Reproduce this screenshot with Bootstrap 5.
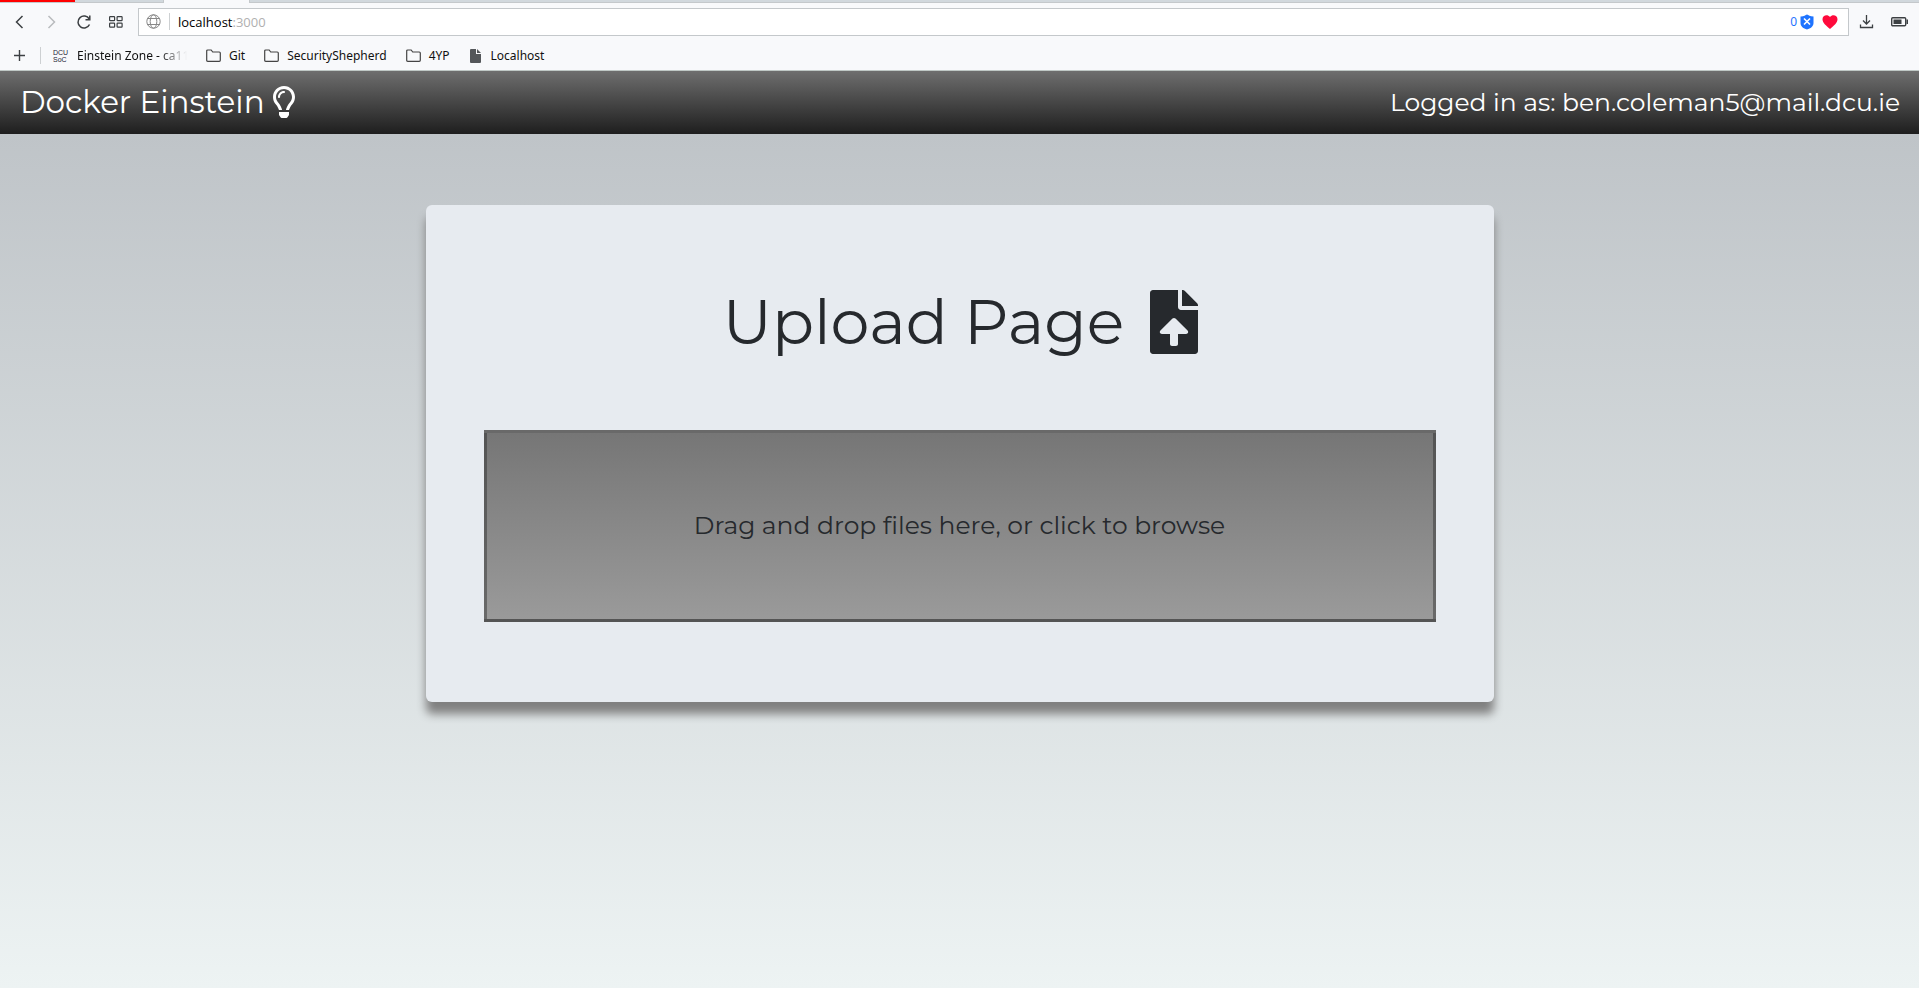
<!DOCTYPE html>
<html lang="en">
<head>
<meta charset="utf-8">
<meta name="viewport" content="width=device-width, initial-scale=1">
<title>Docker Einstein</title>
<link href="https://cdn.jsdelivr.net/npm/bootstrap@5.3.0/dist/css/bootstrap.min.css" rel="stylesheet">
<style>
body{font-family:Montserrat,Inter,"Liberation Sans",sans-serif;color:#26292d;background:#edf3f3}
.page{background:linear-gradient(#bfc4c8,#edf3f3)}
.chrome{font:12px/16px "Noto Sans",sans-serif;color:#111;background:#f8f9fb;border-bottom:1px solid #bfc8c5}
.tabstrip{height:3px;background:#d1d8dd;border-bottom:1px solid #c4c8cb}
.tab-alert{width:75px;background:#f00}
.tab-first{width:89px;border-right:1px solid #c4c8cb}
.tab-active{width:86px;height:3px;background:#f8f9fb;border-right:1px solid #c4c8cb}
.tools{height:37px;padding:0 10px 0 12px;gap:10px}
.tool{width:16px;height:16px;padding:0;border:0;background:none;color:#3c4043;display:flex}
.tool:disabled{color:#b8bbbe}
.tool-wide{width:18px}
.addressbar{height:28px;border:1px solid #c4c8cb;background:#fff;padding:0 10px 0 7px;gap:8px}
.address{font-family:"Open Sans","Noto Sans",sans-serif;font-size:13px;color:#000}
.port{color:#b0b0b0}
.blocked{color:#1f74ff;gap:3px}
.rule{width:1px;height:17px;background:#cdd0d2}
.marks{height:30px;padding:1px 0 0 12px;gap:19px}
.marks a{color:#111;text-decoration:none;gap:8px;white-space:nowrap}
.marks .rule{margin:0 -7px}
.fade-label{width:110px;-webkit-mask-image:linear-gradient(90deg,#000 75%,transparent);mask-image:linear-gradient(90deg,#000 75%,transparent)}
.favicon{font:7px/7px "Liberation Sans",sans-serif;color:#223;width:16px}
.topbar{height:63px;background:linear-gradient(#6e6e6e,#1e1e1e);color:#fff;padding:0 19px 2px 20px}
.brand{font-size:31px;line-height:40px;color:#fff;text-decoration:none;gap:8px}
.who{font-size:25px;line-height:32px}
.panel{width:100%;max-width:1068px;margin:71px auto 0;padding:77px 58px 80px;background:#e7ebf0;border-radius:6px;box-shadow:0 12px 10px 0 #808080}
.panel h1{font-size:62px;font-weight:400;line-height:80px;margin:0 0 68px;gap:26px;padding-left:2px}
.drop{width:100%;height:192px;border:3px solid rgba(39,39,39,.42);background:linear-gradient(#767676,#9a9a9a);font-size:25px;font-variant-ligatures:none;color:#26292d}
</style>
</head>
<body class="d-flex flex-column min-vh-100">
<header class="chrome">
  <div class="tabstrip d-flex"><div class="tab-alert"></div><div class="tab-first"></div><div class="tab-active"></div></div>
  <div class="tools d-flex align-items-center">
    <div class="d-flex gap-3 me-1">
      <button class="tool" aria-label="Back"><svg width="16" height="16" fill="none" stroke="currentColor" stroke-width="1.5"><path d="M10.500 2 4.500 8l6 6"/></svg></button>
      <button class="tool" aria-label="Forward" disabled><svg width="16" height="16" fill="none" stroke="currentColor" stroke-width="1.5"><path d="m4.500 2 6 6-6 6"/></svg></button>
      <button class="tool" aria-label="Reload"><svg width="16" height="16" fill="none" stroke="currentColor" stroke-width="1.5"><path d="M13.200 5A6 6 0 1 0 13.500 10.500M13.800 1.500v4.200H9.500"/></svg></button>
      <button class="tool" aria-label="Speed dial"><svg width="16" height="16" fill="none" stroke="currentColor" stroke-width="1.200"><rect x="1.600" y="2.600" width="5" height="4" rx=".6"/><rect x="9.100" y="2.600" width="5" height="4" rx=".6"/><rect x="1.600" y="9.100" width="5" height="4" rx=".6"/><rect x="9.100" y="9.100" width="5" height="4" rx=".6"/></svg></button>
    </div>
    <div class="addressbar d-flex align-items-center flex-grow-1">
      <svg width="15" height="15" viewBox="0 0 15 15" fill="none" stroke="#888"><circle cx="7.500" cy="7.500" r="6.700"/><ellipse cx="7.500" cy="7.500" rx="3.300" ry="6.700"/><path d="M1.500 4.500h12M1 10.500h13"/></svg>
      <span class="rule"></span>
      <span class="address flex-grow-1">localhost<span class="port">:3000</span></span>
      <span class="blocked d-flex align-items-center">0
        <svg width="14" height="16"><path fill="#1f74ff" d="M1 2.500C4 2.500 5.500 1 7 .5 8.500 1 10 2.500 13.500 2.500V9c0 3.500-3 5.500-6.500 6.500C3.500 14.500.5 12.500.5 9V2.500z"/><path d="m4 4.500 6 6m0-6-6 6" stroke="#fff" stroke-width="1.600"/></svg></span>
      <svg width="16" height="16" fill="#ff0a3c"><path d="M8 15C4 11.500.5 9 .5 5.300.5 1 5.700-.2 8 3c2.300-3.200 7.500-2 7.500 2.300C15.500 9 12 11.500 8 15z"/></svg>
    </div>
    <div class="d-flex gap-3">
      <button class="tool" aria-label="Downloads"><svg width="16" height="16" fill="none" stroke="currentColor" stroke-width="1.300"><path d="M7.500 1v9M4 6.500 7.500 10 11 6.500M1.500 10.500v3h12v-3"/></svg></button>
      <button class="tool tool-wide" aria-label="Battery"><svg width="18" height="16"><rect x=".7" y="3.700" width="14" height="8" rx="1" fill="none" stroke="currentColor" stroke-width="1.400"/><path d="M2.500 5.500h8V10h-8zM15.500 5.500H17v4.500h-1.500z" fill="currentColor"/></svg></button>
    </div>
  </div>
  <nav class="marks d-flex align-items-center" aria-label="Bookmarks">
    <button class="tool" aria-label="Add bookmark"><svg width="16" height="16" stroke="currentColor" stroke-width="1.400"><path d="M7.500 2v11M2 7.500h11"/></svg></button>
    <span class="rule"></span>
    <a class="d-flex align-items-center" href="#"><span class="favicon">DCU<br>SoC</span><span class="fade-label">Einstein Zone - ca11</span></a>
    <a class="d-flex align-items-center" href="#"><svg width="15" height="14" fill="none" stroke="#444" stroke-width="1.200"><path d="M.7 2q0-1 1-1h3.500l1.500 2h6.600q1 0 1 1v7.300q0 1-1 1H1.700q-1 0-1-1z"/></svg>Git</a>
    <a class="d-flex align-items-center" href="#"><svg width="15" height="14" fill="none" stroke="#444" stroke-width="1.200"><path d="M.7 2q0-1 1-1h3.500l1.500 2h6.600q1 0 1 1v7.300q0 1-1 1H1.700q-1 0-1-1z"/></svg>SecurityShepherd</a>
    <a class="d-flex align-items-center" href="#"><svg width="15" height="14" fill="none" stroke="#444" stroke-width="1.200"><path d="M.7 2q0-1 1-1h3.500l1.500 2h6.600q1 0 1 1v7.300q0 1-1 1H1.700q-1 0-1-1z"/></svg>4YP</a>
    <a class="d-flex align-items-center" href="#"><svg width="14" height="14" fill="#54575a"><path d="M2 0h5v5h5v8q0 1-1 1H2q-1 0-1-1V1q0-1 1-1zM8 0l4 4H8z"/></svg>Localhost</a>
  </nav>
</header>
<nav class="topbar d-flex justify-content-between align-items-center">
  <a class="brand d-flex align-items-center" href="#">Docker Einstein<svg width="22" height="32" viewBox="0 0 352 512" fill="#fff"><path d="M176 80c-52.940 0-96 43.060-96 96 0 8.840 7.160 16 16 16s16-7.160 16-16c0-35.300 28.720-64 64-64 8.840 0 16-7.160 16-16s-7.160-16-16-16zM96.060 459.170c0 3.150.93 6.220 2.680 8.840l24.510 36.840c2.970 4.460 7.970 7.140 13.320 7.140h78.850c5.360 0 10.360-2.680 13.320-7.140l24.510-36.840c1.740-2.620 2.670-5.700 2.680-8.840l.05-43.180H96.020l.04 43.180zM176 0C73.720 0 0 82.970 0 176c0 44.370 16.450 84.850 43.560 115.780 16.640 18.990 42.740 58.800 52.420 92.160v.06h48v-.12c-.01-4.770-.72-9.510-2.150-14.070-5.590-17.810-22.820-64.770-62.170-109.670-20.540-23.430-31.520-53.150-31.610-84.140-.2-73.640 59.670-128 127.950-128 70.580 0 128 57.420 128 128 0 30.970-11.240 60.850-31.650 84.140-39.110 44.610-56.420 91.470-62.100 109.460a47.507 47.507 0 0 0-2.220 14.300v.1h48v-.05c9.680-33.370 35.780-73.180 52.420-92.160C335.550 260.850 352 220.370 352 176 352 78.800 273.200 0 176 0z"/></svg></a>
  <span class="who">Logged in as: ben.coleman5@mail.dcu.ie</span>
</nav>
<main class="page flex-grow-1 px-3">
  <section class="panel">
    <h1 class="d-flex align-items-center justify-content-center">Upload Page<svg width="48" height="64" viewBox="0 0 384 512" fill="currentColor"><path d="M224 136V0H24C10.700 0 0 10.700 0 24v464c0 13.300 10.700 24 24 24h336c13.300 0 24-10.700 24-24V160H248c-13.200 0-24-10.800-24-24zm65.180 216.010H224v80c0 8.840-7.160 16-16 16h-32c-8.840 0-16-7.160-16-16v-80H94.820c-14.280 0-21.410-17.290-11.270-27.360l96.420-95.700c6.650-6.610 17.390-6.610 24.040 0l96.420 95.700c10.150 10.070 3.030 27.360-11.250 27.360zM377 105L279.100 7c-4.500-4.500-10.600-7-17-7H256v128h128v-6.100c0-6.300-2.500-12.400-7-16.900z"/></svg></h1>
    <button class="drop">Drag and drop files here, or click to browse</button>
  </section>
</main>
<script src="https://cdn.jsdelivr.net/npm/bootstrap@5.3.0/dist/js/bootstrap.bundle.min.js"></script>
</body>
</html>
